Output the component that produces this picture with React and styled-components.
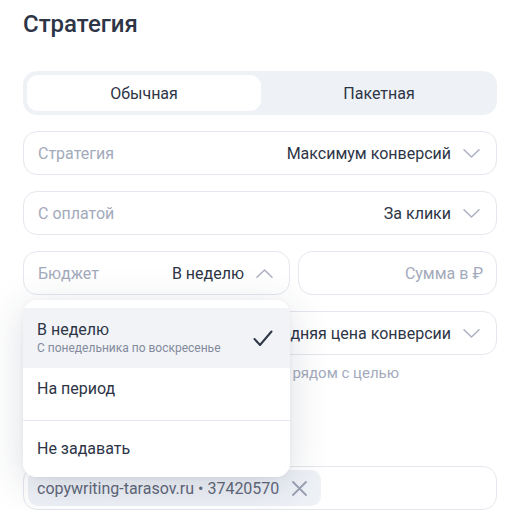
import React from "react";
import styled, { createGlobalStyle } from "styled-components";

const GlobalStyle = createGlobalStyle`
  body {
    margin: 0;
    background: #fff;
    font-family: Roboto, "Noto Sans", sans-serif;
    color: #2d3546;
  }
`;

function Chevron({ up }) {
  return (
    <svg width="17" height="9" viewBox="0 0 17 9" fill="none">
      <path
        d={up ? "M1 8.2L8.5 1L16 8.2" : "M1 0.8L8.5 8L16 0.8"}
        stroke="#aab1c0"
        strokeWidth="1.5"
        strokeLinecap="round"
        strokeLinejoin="round"
      />
    </svg>
  );
}

function Check() {
  return (
    <svg width="20" height="17" viewBox="0 0 20 17" fill="none">
      <path
        d="M1.5 9L7 15L18.5 1.5"
        stroke="#2d3546"
        strokeWidth="2"
        strokeLinecap="round"
        strokeLinejoin="round"
      />
    </svg>
  );
}

function Cross() {
  return (
    <svg width="15" height="15" viewBox="0 0 15 15" fill="none">
      <path
        d="M1 1L14 14M14 1L1 14"
        stroke="#9aa1b1"
        strokeWidth="1.8"
        strokeLinecap="round"
      />
    </svg>
  );
}

function App() {
  return (
    <>
      <GlobalStyle />
      <Page>
        <Title>Стратегия</Title>

        <Segmented>
          <Segment active>Обычная</Segment>
          <Segment>Пакетная</Segment>
        </Segmented>

        <Form>
          <Field>
            <Label>Стратегия</Label>
            <Value>Максимум конверсий</Value>
            <Chevron />
          </Field>

          <Field>
            <Label>С оплатой</Label>
            <Value>За клики</Value>
            <Chevron />
          </Field>

          <Row>
            <BudgetWrap>
              <Field>
                <Label>Бюджет</Label>
                <Value>В неделю</Value>
                <Chevron up />
              </Field>

              <Menu>
                <MenuItem selected>
                  <ItemText>
                    <ItemTitle>В неделю</ItemTitle>
                    <ItemHint>С понедельника по воскресенье</ItemHint>
                  </ItemText>
                  <Check />
                </MenuItem>
                <MenuItem>
                  <ItemTitle>На период</ItemTitle>
                </MenuItem>
                <Divider />
                <MenuItem last>
                  <ItemTitle>Не задавать</ItemTitle>
                </MenuItem>
              </Menu>
            </BudgetWrap>

            <Field>
              <Placeholder>Сумма в ₽</Placeholder>
            </Field>
          </Row>

          <div>
            <Field>
              <Label />
              <Value>Средняя цена конверсии</Value>
              <Chevron />
            </Field>
            <Hint>рядом с целью</Hint>
          </div>

          <GoalField>
            <Chip>
              copywriting-tarasov.ru • 37420570
              <Cross />
            </Chip>
          </GoalField>
        </Form>
      </Page>
    </>
  );
}

export default App;

const Page = styled.div`
  width: 474px;
  padding: 10px 21px 0 23px;
`;

const Title = styled.h2`
  margin: 0;
  font-size: 24px;
  line-height: 28px;
  font-weight: 500;
  color: #2d3546;
`;

const Segmented = styled.div`
  margin-top: 33px;
  height: 44px;
  box-sizing: border-box;
  padding: 4px;
  display: grid;
  grid-template-columns: 234px 1fr;
  gap: 4px;
  background: #eef1f6;
  border-radius: 14px;
`;

const Segment = styled.div`
  display: flex;
  align-items: center;
  justify-content: center;
  font-size: 16px;
  color: #2d3546;
  border-radius: 11px;
  background: ${(p) => (p.active ? "#fff" : "transparent")};
`;

const Form = styled.div`
  margin-top: 16px;
  display: flex;
  flex-direction: column;
  gap: 16px;
`;

const Field = styled.div`
  height: 44px;
  box-sizing: border-box;
  display: flex;
  align-items: center;
  gap: 12px;
  padding: 0 16px 0 14px;
  border: 1px solid #e4e7ee;
  border-radius: 14px;
  background: #fff;
  font-size: 16px;
`;

const GoalField = styled(Field)`
  margin-top: 67px;
  padding: 0 4px;
`;

const Label = styled.span`
  flex: 1;
  color: #a3aabb;
  white-space: nowrap;
`;

const Value = styled.span`
  color: #2d3546;
  white-space: nowrap;
`;

const Placeholder = styled.span`
  flex: 1;
  text-align: right;
  color: #a3aabb;
  margin-right: -3px;
`;

const Row = styled.div`
  display: grid;
  grid-template-columns: 267px 1fr;
  gap: 8px;
`;

const BudgetWrap = styled.div`
  position: relative;
`;

const Menu = styled.div`
  position: absolute;
  z-index: 2;
  top: 49px;
  left: 0;
  width: 267px;
  padding-top: 8px;
  background: #fff;
  border-radius: 14px;
  box-shadow: 0 8px 40px rgba(40, 52, 80, 0.16), 0 1px 4px rgba(40, 52, 80, 0.05);
  overflow: hidden;
`;

const MenuItem = styled.div`
  display: flex;
  align-items: ${(p) => (p.selected || p.last ? "center" : "flex-start")};
  justify-content: space-between;
  box-sizing: border-box;
  height: ${(p) => (p.selected ? "60px" : p.last ? "56px" : "52px")};
  padding: ${(p) => (p.selected || p.last ? "0 17px 0 14px" : "11px 14px 0")};
  background: ${(p) => (p.selected ? "#f1f3f7" : "#fff")};
`;

const ItemText = styled.div`
  display: flex;
  flex-direction: column;
  gap: 1px;
`;

const ItemTitle = styled.div`
  font-size: 16px;
  line-height: 20px;
  color: #2d3546;
`;

const ItemHint = styled.div`
  font-size: 12px;
  line-height: 15px;
  color: #838a9b;
`;

const Divider = styled.div`
  height: 1px;
  background: #e6e9ef;
`;

const Hint = styled.div`
  margin-top: 8px;
  font-size: 15px;
  line-height: 20px;
  color: #a3aabb;
  text-align: right;
  padding-right: 98px;
`;

const Chip = styled.div`
  height: 36px;
  box-sizing: border-box;
  display: flex;
  align-items: center;
  gap: 13px;
  padding: 0 14px 0 9px;
  border-radius: 10px;
  background: #eef1f6;
  color: #5f6779;
  font-size: 16px;
  white-space: nowrap;
`;
